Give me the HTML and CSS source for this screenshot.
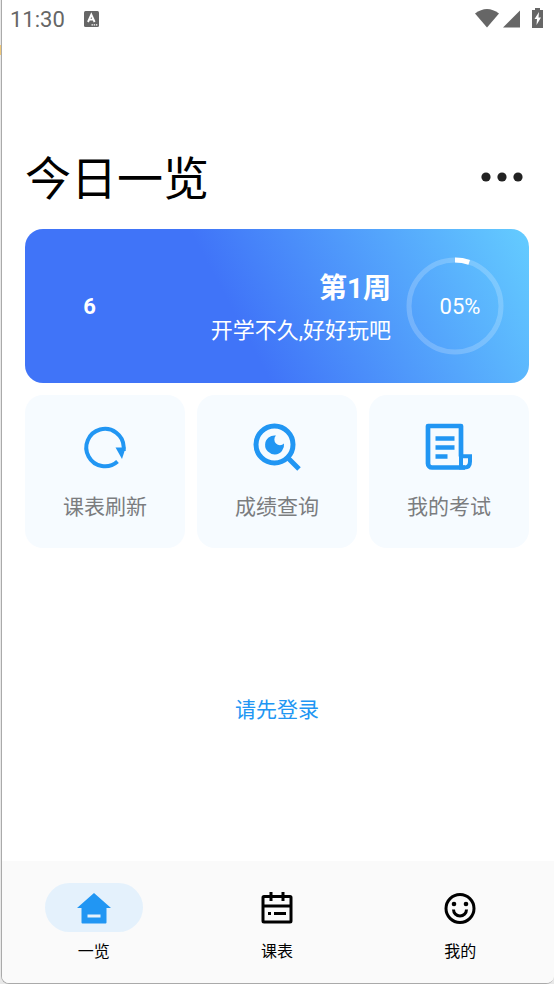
FILE: index.html
```html
<!DOCTYPE html>
<html lang="zh-CN">
<head>
<meta charset="utf-8">
<meta name="viewport" content="width=device-width, initial-scale=1">
<title>今日一览</title>
<link rel="stylesheet" href="styles.css">
</head>
<body>
<div class="app">
  <header class="status">
    <span class="clock">11:30</span>
    <svg class="ime" width="15" height="16" viewBox="0 0 15 16" aria-hidden="true"><rect width="15" height="16" rx="1.500" fill="#666"/><path d="M4 11L7.300 3.500L10.600 11M5 8.600h4.600" fill="none" stroke="#fff" stroke-width="1.900"/><path d="M7.500 13.800h6" stroke="#fff" stroke-width="1.200" stroke-dasharray="1.400 .8"/></svg>
    <svg class="signals" width="70" height="22" viewBox="0 0 70 22" fill="#666" aria-hidden="true">
      <path d="M0 5.500Q12-3.500 24 5.500L12 19.500z"/>
      <path d="M28 19.500L45 2.500v17z"/>
      <path d="M57 2h3V0h5v2H68v18H57z"/>
      <path d="M64 4L59.500 11H62l-.5 6 4.500-7.500H63.500z" fill="#fff"/>
    </svg>
  </header>
  <main class="content">
    <div class="heading">
      <h1>今日一览</h1>
      <button class="more" type="button" aria-label="更多">
        <svg width="42" height="10" viewBox="0 0 42 10" fill="#222"><circle cx="5" cy="5" r="4.600"/><circle cx="21" cy="5" r="4.600"/><circle cx="37" cy="5" r="4.600"/></svg>
      </button>
    </div>
    <section class="week">
      <strong class="count">6</strong>
      <div class="summary">
        <h2>第1周</h2>
        <p>开学不久,好好玩吧</p>
      </div>
      <div class="ring">
        <svg viewBox="0 0 98 98" fill="none" stroke-width="5" aria-hidden="true"><circle cx="49" cy="49" r="46" stroke="#fff" stroke-opacity=".2"/><path d="M49 3A46 46 0 0 1 63.200 5.300" stroke="#fff"/></svg>
        <span>05%</span>
      </div>
    </section>
    <div class="tiles">
      <button class="tile" type="button">
        <svg width="48" height="48" viewBox="0 0 48 48" aria-hidden="true"><path d="M36.500 38.500A18.700 18.700 0 1 1 42.700 24v4" fill="none" stroke="#2196f3" stroke-width="4"/><path d="M34.500 24.500h10.200L41 36z" fill="#2196f3"/></svg>
        <span>课表刷新</span>
      </button>
      <button class="tile" type="button">
        <svg width="48" height="48" viewBox="0 0 48 48" aria-hidden="true"><circle cx="21.500" cy="21.500" r="18.500" fill="none" stroke="#2196f3" stroke-width="5"/><path d="M34 34l12 12" stroke="#2196f3" stroke-width="5"/><path d="M23 12.500A9.500 9.500 0 1 0 31 20.500A5.600 5.600 0 0 1 23 12.500z" fill="#2196f3"/></svg>
        <span>成绩查询</span>
      </button>
      <button class="tile" type="button">
        <svg width="48" height="48" viewBox="0 0 48 48" fill="none" stroke="#2196f3" aria-hidden="true"><path d="M36 33.500V3H3V40.500A4 4 0 0 0 7 44.500H40" stroke-width="4.700" stroke-linejoin="round"/><path d="M36 44.500V33.300H45V38.500Q45 44.500 39.500 44.500z" stroke-width="4"/><path d="M10.500 15.500H29.500M10.500 24.500H29.500M10.500 33.500H22.500" stroke-width="4.500"/></svg>
        <span>我的考试</span>
      </button>
    </div>
    <a class="login" href="#login">请先登录</a>
  </main>
  <nav class="tabs" aria-label="主导航">
    <a class="tab" href="#today" aria-current="page">
      <span class="pill"><svg width="34" height="34" viewBox="0 0 34 34" aria-hidden="true"><path d="M17 2L34 17H29.500V31.500q0 1-1 1h-23q-1 0-1-1V17H0z" fill="#2196f3"/><path d="M10.500 25H23.500" stroke="#e6f2fc" stroke-width="3"/></svg></span>
      <span>一览</span>
    </a>
    <a class="tab" href="#schedule">
      <span class="pill"><svg width="34" height="34" viewBox="0 0 34 34" fill="none" stroke="#000" stroke-width="3" aria-hidden="true"><rect x="3" y="5.500" width="28" height="25.500" rx="1"/><path d="M3 15H31M11 1v9M23 1v9"/><path d="M8 22.500h3M14 22.500h12"/></svg></span>
      <span>课表</span>
    </a>
    <a class="tab" href="#me">
      <span class="pill"><svg width="34" height="34" viewBox="0 0 34 34" fill="none" stroke="#000" stroke-width="3" aria-hidden="true"><circle cx="17" cy="17.500" r="14"/><path d="M10.500 18.500a6.500 6.500 0 0 0 13 0"/><circle cx="11" cy="13" r="2.300" fill="#000" stroke="none"/><circle cx="23" cy="13" r="2.300" fill="#000" stroke="none"/></svg></span>
      <span>我的</span>
    </a>
  </nav>
</div>
</body>
</html>
```
FILE: styles.css
```css
* { box-sizing: border-box; }
html { height: 100%; }
body {
  margin: 0;
  min-height: 100%;
  display: flex;
  padding-left: 1px;
  background: #e8e8e8 linear-gradient(#f0c878, #f0c878) 0 45px / 2px 10px no-repeat;
  font-family: Roboto, "Noto Sans CJK SC", sans-serif;
}
h1, h2, p { margin: 0; font-weight: 400; }
button { border: 0; padding: 0; background: none; font: inherit; cursor: pointer; }
a { text-decoration: none; }
svg { display: block; }

.app {
  flex: 1;
  min-height: 100vh;
  display: flex;
  flex-direction: column;
  overflow: hidden;
  background: #fff;
  border: solid #aaa;
  border-width: 0 0 1px 1px;
  border-radius: 0 0 8px 8px;
}
.status {
  display: flex;
  align-items: center;
  height: 38px;
  padding: 0 9px 0 8px;
  color: #666;
}
.clock { font-size: 22px; line-height: 38px; padding-top: 2px; }
.ime { margin-left: 19px; }
.signals { margin-left: auto; }

.content {
  flex: 1;
  display: flex;
  flex-direction: column;
  padding: 104px 25px 0 23px;
}
.heading {
  display: flex;
  align-items: center;
  justify-content: space-between;
  height: 70px;
  margin-bottom: 17px;
}
h1 { padding-top: 4px; font-size: 46px; line-height: 70px; color: #000; }
.more { padding: 4px 6px; }

.week {
  display: flex;
  align-items: center;
  height: 154px;
  padding-right: 25px;
  border-radius: 18px;
  background: linear-gradient(62deg, #4074f8 42%, #64ccff);
  color: #fff;
}
.count { width: 129px; text-align: center; font-size: 22px; }
.summary { flex: 1; padding-top: 8px; text-align: right; }
h2 { font-size: 28px; line-height: 42px; font-weight: 700; }
.summary p { font-size: 22px; line-height: 42px; }
.ring {
  display: grid;
  place-items: center;
  width: 98px;
  margin-left: 15px;
}
.ring > * { grid-area: 1 / 1; }
.ring svg { width: 100%; }
.ring span { padding-left: 10px; font-size: 22px; }

.tiles {
  display: grid;
  grid-template-columns: repeat(3, 1fr);
  gap: 12px;
  margin-top: 12px;
}
.tile {
  display: flex;
  flex-direction: column;
  align-items: center;
  gap: 20px;
  padding: 28px 0 24px;
  border-radius: 18px;
  background: #f6fbff;
  color: #7b7d7f;
  font-size: 21px;
  line-height: 33px;
}
.login {
  align-self: center;
  margin-top: 146px;
  color: #2196f3;
  font-size: 21px;
  line-height: 32px;
}

.tabs {
  display: grid;
  grid-template-columns: repeat(3, 1fr);
  height: 122px;
  padding: 22px 2px 0 0;
  background: #fafafa;
}
.tab {
  display: flex;
  flex-direction: column;
  align-items: center;
  gap: 8px;
  color: #000;
  font-size: 16px;
  line-height: 24px;
}
.pill {
  display: grid;
  place-items: center;
  width: 98px;
  height: 49px;
  border-radius: 25px;
}
.tab[aria-current] .pill { background: #e4f1fc; }
```
